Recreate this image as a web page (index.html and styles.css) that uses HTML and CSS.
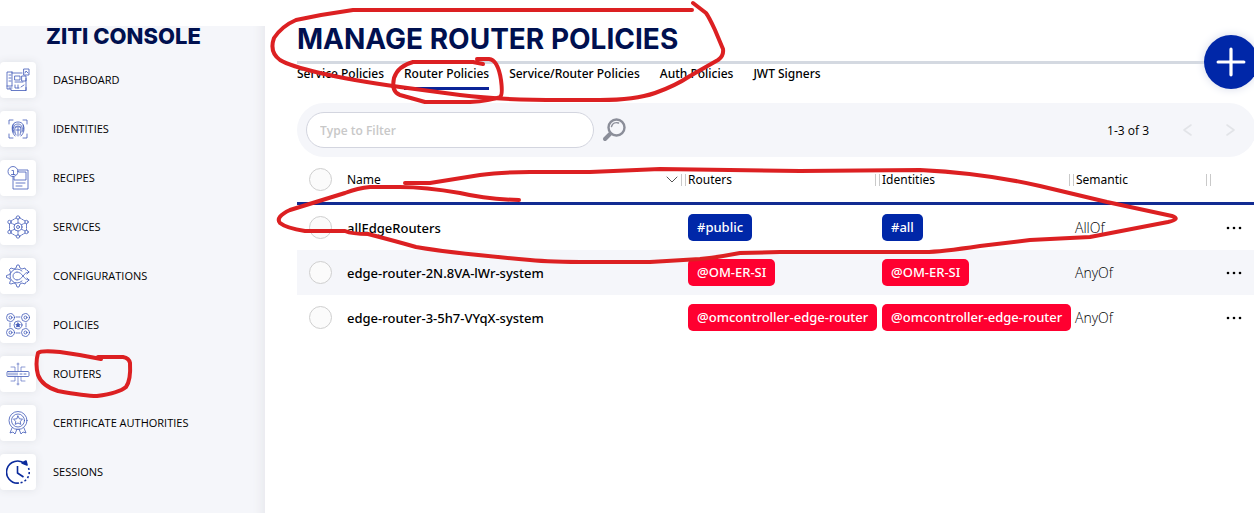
FILE: index.html
```html
<!DOCTYPE html>
<html lang="en">
<head>
<meta charset="utf-8">
<meta name="viewport" content="width=device-width, initial-scale=1">
<title>Ziti Console - Manage Router Policies</title>
<link rel="stylesheet" href="styles.css">
</head>
<body>
<div class="app">
  <aside class="sidebar">
    <div class="brand">ZITI CONSOLE</div>
    <nav class="nav" aria-label="Main">
      <a class="nav-item" href="#dashboard"><span class="nav-icon"><svg viewBox="0 0 24 24"><path d="M6 4h-5v17h4v1.500h15v-12M6 4v14M1 18h5M6 5h10M3 7h2M3 10h2M3 13h2M3 20h3M9 8h5v4h-5zM16 8h4v5h-4zM9 14h8M9 17v3h4M12 17v3M15 19l3-2M18 1h5v6h-5zM19 5l1-2 2 2M20 22.500v-3"/></svg></span>DASHBOARD</a>
      <a class="nav-item" href="#identities"><span class="nav-icon"><svg viewBox="0 0 24 24"><path d="M3 7V3h4M17 3h4v4M21 17v4h-4M7 21H3v-4M7 14c-2-5 0-9 5-9s7 4 5 9M8 16c-2-5 0-9 4-9s5 4 4 8M10 18c-2-4-2-9 2-9s3 5 2 9M12 11v8M9 19c-3-3-4-8-1-12M15 19c3-3 4-7 2-11M10 13h4M9 10h6"/></svg></span>IDENTITIES</a>
      <a class="nav-item" href="#recipes"><span class="nav-icon"><svg viewBox="0 0 24 24"><circle cx="7" cy="5.500" r="5"/><path d="M6 4.500h1.500v4M5.500 8.500h3.500M7 10.500V23h15V4H12M13 6h7v8H8v-3M10 17h9M10 20h6"/></svg></span>RECIPES</a>
      <a class="nav-item" href="#services"><span class="nav-icon"><svg viewBox="0 0 24 24"><circle cx="12" cy="12" r="4"/><circle cx="12" cy="12" r="1.500"/><circle cx="12" cy="2.500" r="1.700"/><circle cx="12" cy="21.500" r="1.700"/><circle cx="3.500" cy="7" r="1.700"/><circle cx="20.500" cy="7" r="1.700"/><circle cx="3.500" cy="17" r="1.700"/><circle cx="20.500" cy="17" r="1.700"/><path stroke-dasharray="1.500 1" d="M12 4v4M12 16v4M5 8l4 2M19 8l-4 2M5 16l4-2M19 16l-4-2M10 3L5 6M14 3l5 3M3.500 9v6M20.500 9v6M5 18l5 3M19 18l-5 3"/></svg></span>SERVICES</a>
      <a class="nav-item" href="#configurations"><span class="nav-icon"><svg viewBox="0 0 24 24"><path d="M20 6l-1-2-3 1-2-1-1-3h-2l-1 3-2 1-3-1-1.500 1.500 1 3-1 2-3 1v2l3 1 1 2-1 3L5 20l3-1 2 1 1 3h2l1-3 2-1 3 1 1-2M16 7a7 7 0 1 0 0 10M11 8c6 0 6 8 12 8M11 16c6 0 6-8 12-8M11 8a4 4 0 0 0 0 8M21 6l2 2-2 2M21 14l2 2-2 2"/></svg></span>CONFIGURATIONS</a>
      <a class="nav-item" href="#policies"><span class="nav-icon"><svg viewBox="0 0 24 24"><circle cx="4.500" cy="4.500" r="4"/><circle cx="19.500" cy="4.500" r="4"/><circle cx="4.500" cy="19.500" r="4"/><circle cx="19.500" cy="19.500" r="4"/><circle cx="12" cy="12" r="4"/><circle cx="4.500" cy="4.500" r="1.500"/><circle cx="19.500" cy="4.500" r="1.500"/><circle cx="4.500" cy="19.500" r="1.500"/><circle cx="19.500" cy="19.500" r="1.500"/><path fill="currentColor" d="M12 10l.7 1.300 1.500.2-1 1 .2 1.500-1.400-.7-1.400.7.200-1.500-1-1 1.500-.2z"/><path stroke-dasharray="1.500 1" d="M10 4h4M10 20h4M4 10v4M20 10v4"/></svg></span>POLICIES</a>
      <a class="nav-item" href="#routers"><span class="nav-icon"><svg viewBox="0 0 24 24"><rect x="1" y="9.500" width="22" height="5" rx="1"/><path d="M3 11v2M5 11v2M7 11v2M9 11v2M11 11v2M14 12h2M18 12h2"/><path stroke-width="0.600" d="M12 1v8M12 15v8M9 9V5H5M15 9V5h4M9 15v4H5M15 15v4h4M11 2h2M11 22h2"/></svg></span>ROUTERS</a>
      <a class="nav-item" href="#authorities"><span class="nav-icon"><svg viewBox="0 0 24 24"><circle cx="12" cy="9.500" r="9"/><circle cx="12" cy="9.500" r="6.500"/><path d="M12 5l1.400 2.800 3.100.4-2.300 2.200.6 3-2.800-1.400-2.800 1.400.6-3-2.300-2.200 3.100-.4zM6 17l-2 5 3-1 2 2 2-5M18 17l2 5-3-1-2 2-2-5"/></svg></span>CERTIFICATE AUTHORITIES</a>
      <a class="nav-item" href="#sessions"><span class="nav-icon nav-icon-bold"><svg viewBox="0 0 24 24"><path d="M19 4A11 11 0 1 0 13 23M11.500 6v7l6 4"/><path fill="currentColor" d="M16 3l5 2-1-4z"/><path stroke-dasharray="2 2.200" d="M22.500 8A11 11 0 0 1 13 23"/></svg></span>SESSIONS</a>
    </nav>
  </aside>

  <main class="main">
    <header class="page-head">
      <h1 class="page-title">MANAGE ROUTER POLICIES</h1>
      <button class="add" type="button" aria-label="Add policy"><svg viewBox="0 0 28 28"><path d="M14 2v24M2 14h24"/></svg></button>
    </header>
    <nav class="tabs" aria-label="Policy types">
      <a class="tab" href="#service-policies">Service Policies</a>
      <a class="tab tab-active" href="#router-policies" aria-current="page">Router Policies</a>
      <a class="tab" href="#service-router-policies">Service/Router Policies</a>
      <a class="tab" href="#auth-policies">Auth Policies</a>
      <a class="tab" href="#jwt-signers">JWT Signers</a>
    </nav>
    <form class="filter-bar">
      <input class="filter-input" type="text" placeholder="Type to Filter" aria-label="Type to Filter">
      <button class="icon-button" type="button" aria-label="Search"><svg class="search-icon" viewBox="0 0 24 24"><circle cx="14.500" cy="9.500" r="8"/><path stroke-width="1.500" d="M9.500 8.500c1-3 4-4.500 7-3.500"/><path stroke-width="4" d="M8 16l-5 5"/></svg></button>
      <span class="page-count">1-3 of 3</span>
      <button class="icon-button pager" type="button" aria-label="Previous page"><svg viewBox="0 0 12 14"><path d="M10 2L3 7l7 5"/></svg></button>
      <button class="icon-button pager" type="button" aria-label="Next page"><svg viewBox="0 0 12 14"><path d="M2 2l7 5-7 5"/></svg></button>
    </form>
    <table class="grid">
      <colgroup><col class="col-check"><col><col class="col-tags"><col class="col-tags"><col class="col-semantic"><col class="col-menu"></colgroup>
      <thead>
        <tr>
          <th><input class="check" type="checkbox" aria-label="Select all"></th>
          <th><div class="name-head">Name<svg class="caret" viewBox="0 0 12 8"><path d="M1 1l5 5 5-5"/></svg></div></th>
          <th><div class="split">Routers</div></th>
          <th><div class="split">Identities</div></th>
          <th><div class="split">Semantic</div></th>
          <th><div class="split"></div></th>
        </tr>
      </thead>
      <tbody>
        <tr>
          <td><input class="check" type="checkbox" aria-label="Select allEdgeRouters"></td>
          <td class="name">allEdgeRouters</td>
          <td class="tag-cell"><span class="tag">#public</span></td>
          <td class="tag-cell"><span class="tag">#all</span></td>
          <td class="semantic">AllOf</td>
          <td><button class="icon-button more" type="button" aria-label="Row actions"><svg viewBox="0 0 16 4"><circle cx="2" cy="2" r="1.300"/><circle cx="8" cy="2" r="1.300"/><circle cx="14" cy="2" r="1.300"/></svg></button></td>
        </tr>
        <tr>
          <td><input class="check" type="checkbox" aria-label="Select edge-router-2N.8VA-lWr-system"></td>
          <td class="name">edge-router-2N.8VA-lWr-system</td>
          <td class="tag-cell"><span class="tag tag-entity">@OM-ER-SI</span></td>
          <td class="tag-cell"><span class="tag tag-entity">@OM-ER-SI</span></td>
          <td class="semantic">AnyOf</td>
          <td><button class="icon-button more" type="button" aria-label="Row actions"><svg viewBox="0 0 16 4"><circle cx="2" cy="2" r="1.300"/><circle cx="8" cy="2" r="1.300"/><circle cx="14" cy="2" r="1.300"/></svg></button></td>
        </tr>
        <tr>
          <td><input class="check" type="checkbox" aria-label="Select edge-router-3-5h7-VYqX-system"></td>
          <td class="name">edge-router-3-5h7-VYqX-system</td>
          <td class="tag-cell"><span class="tag tag-entity">@omcontroller-edge-router</span></td>
          <td class="tag-cell"><span class="tag tag-entity">@omcontroller-edge-router</span></td>
          <td class="semantic">AnyOf</td>
          <td><button class="icon-button more" type="button" aria-label="Row actions"><svg viewBox="0 0 16 4"><circle cx="2" cy="2" r="1.300"/><circle cx="8" cy="2" r="1.300"/><circle cx="14" cy="2" r="1.300"/></svg></button></td>
        </tr>
      </tbody>
    </table>
  </main>
</div>
<svg class="markup" width="1254" height="513" viewBox="0 0 1254 513" aria-hidden="true">
  <path d="M692 10H353L321 15L296 20Q282 26 274 38Q269 52 280 60Q290 66 320 73Q350 80 400 87L460 95Q500 100 560 100H600Q635 100 655 93Q675 86 690 76L718 60Q724 56 723 49L715 30Q709 17 706 13L693 3"/>
  <path d="M483 64L473 62H413Q398 66 394 78Q391 92 400 95L425 102H470Q490 101 500 97Q503 95 501 80Q498 60 489 59L477 59"/>
  <path d="M101 359Q82 355 60 352Q41 350 38 353Q35 364 38 375Q42 386 58 391Q85 396 97 396Q119 393 126 387Q131 380 130 363Q129 358 123 357H98"/>
  <path d="M519 200Q485 199 460 193Q425 187 400 187H370Q358 188 345 193L290 210Q275 217 280 223Q286 228 305 231H345Q352 234 368 234Q395 241 416 247Q450 253 530 260Q550 262 590 262H650L700 259Q720 257 740 253L780 252H925Q940 252 980 246L1030 240L1090 237L1168 222Q1181 219 1172 216L1107 202L1040 186Q983 173 920 170L800 171L660 169L590 172H530Q500 172 480 175L430 183H405"/>
</svg>
</body>
</html>
```
FILE: styles.css
```css
* { box-sizing: border-box; }

body {
  margin: 0;
  padding-top: 26px;
  background: #fff;
  color: #000;
  font-family: "Noto Sans", "Open Sans", sans-serif;
  font-size: 12px;
  overflow: hidden;
}

a { color: inherit; text-decoration: none; }
svg { display: block; fill: none; stroke: currentColor; stroke-linecap: round; stroke-linejoin: round; }

.app { display: flex; min-height: calc(100vh - 26px); }

.sidebar {
  flex: 0 0 265px;
  background: #f5f6fa;
  box-shadow: inset -14px 0 10px -10px #e9eaee;
}

.brand {
  padding-left: 46px;
  color: #00104f;
  font: 800 22px/20px Inter, sans-serif;
}

.nav { display: flex; flex-direction: column; gap: 13px; margin-top: 16px; font: 11px/16px "Open Sans", sans-serif; }
.nav-item { display: flex; align-items: center; gap: 17px; }

.nav-icon {
  display: grid;
  place-items: center;
  width: 36px;
  height: 36px;
  border-radius: 4px;
  background: #fff;
  box-shadow: 0 0 8px #dfe1e6;
  color: #4059b8;
}
.nav-icon svg { width: 24px; height: 24px; stroke-width: 0.8; }
.nav-icon-bold { color: #0a2a9c; }
.nav-icon-bold svg { stroke-width: 1.6; stroke-linecap: butt; }

.main { flex: 1; min-width: 0; padding-left: 32px; }

.page-head { position: relative; height: 38px; border-bottom: 3px solid #d4d9e1; }
.page-title { margin: 0; color: #00104f; font: 700 28px/26px Inter, sans-serif; white-space: nowrap; }

.add {
  position: absolute;
  top: 9px;
  right: -4px;
  display: grid;
  place-items: center;
  width: 54px;
  height: 54px;
  padding: 0;
  border: 0;
  border-radius: 50%;
  background: #0027a8;
  color: #fff;
  box-shadow: 0 0 10px #d5d9e8;
}
.add svg { width: 30px; height: 30px; stroke-width: 3; }

.tabs { display: flex; gap: 20px; font-weight: 500; line-height: 20px; }
.tab { padding-bottom: 3px; border-bottom: 3px solid transparent; }
.tab-active { border-color: #0b2497; }

.filter-bar {
  display: flex;
  align-items: center;
  height: 54px;
  margin: 13px -2px 0 0;
  padding: 0 19px 0 9px;
  border-radius: 27px;
  background: #f5f6fa;
}
.filter-input {
  width: 288px;
  height: 36px;
  padding: 0 13px;
  border: 1px solid #d3d5df;
  border-radius: 18px;
  background: #fff;
  font: 600 12px "Open Sans", sans-serif;
}
.filter-input::placeholder { color: #c8c8c8; opacity: 1; }

.icon-button { padding: 0; border: 0; background: none; color: #000; }
.search-icon { width: 24px; height: 24px; margin-left: 8px; color: #8b8e99; stroke-width: 2.4; }
.page-count { margin-left: auto; font-family: "Open Sans", sans-serif; }
.pager { margin-left: 32px; color: #e2e4e8; }
.pager svg { width: 12px; height: 14px; stroke-width: 1.6; }

.grid { width: 100%; table-layout: fixed; border-collapse: separate; border-spacing: 0; }
.col-check { width: 50px; }
.col-tags { width: 194px; }
.col-semantic { width: 137px; }
.col-menu { width: 48px; }

.grid th { height: 48px; padding: 0; border-bottom: 3px solid #122b92; font-weight: 400; text-align: left; }
.grid td { height: 45px; padding: 0; }
.grid tbody tr:nth-child(even) { background: #f5f6fa; }

.check {
  display: block;
  width: 23px;
  height: 23px;
  margin: 0 0 0 12px;
  border: 1px solid #cfcfcf;
  border-radius: 50%;
  background: #fbfbfb;
  appearance: none;
}
.name-head { display: flex; align-items: center; justify-content: space-between; padding-right: 3px; }
.caret { width: 12px; height: 8px; color: #555; stroke-width: 1; }

.split { display: flex; gap: 2px; height: 18px; line-height: 18px; }
.split::before { content: ""; width: 3px; height: 12px; margin-top: 3px; border: solid #c9c9c9; border-width: 0 1px; }

.grid .name { font-size: 13px; font-weight: 500; white-space: nowrap; }
.grid .semantic { padding-left: 6px; font: 300 14px "Open Sans", sans-serif; }
.grid .tag-cell { padding-left: 7px; white-space: nowrap; }
.tag {
  display: inline-block;
  padding: 0 9px;
  border-radius: 5px;
  background: #0027a8;
  color: #fff;
  font-size: 13px;
  font-weight: 500;
  line-height: 27px;
}
.tag-entity { background: #ff0030; }

.more { display: block; margin-left: 20px; }
.more svg { width: 16px; height: 4px; fill: currentColor; stroke: none; }

/* Hand-drawn annotations over the page */
.markup { position: absolute; top: 0; left: 0; color: #dc2022; stroke-width: 4; pointer-events: none; }
```
